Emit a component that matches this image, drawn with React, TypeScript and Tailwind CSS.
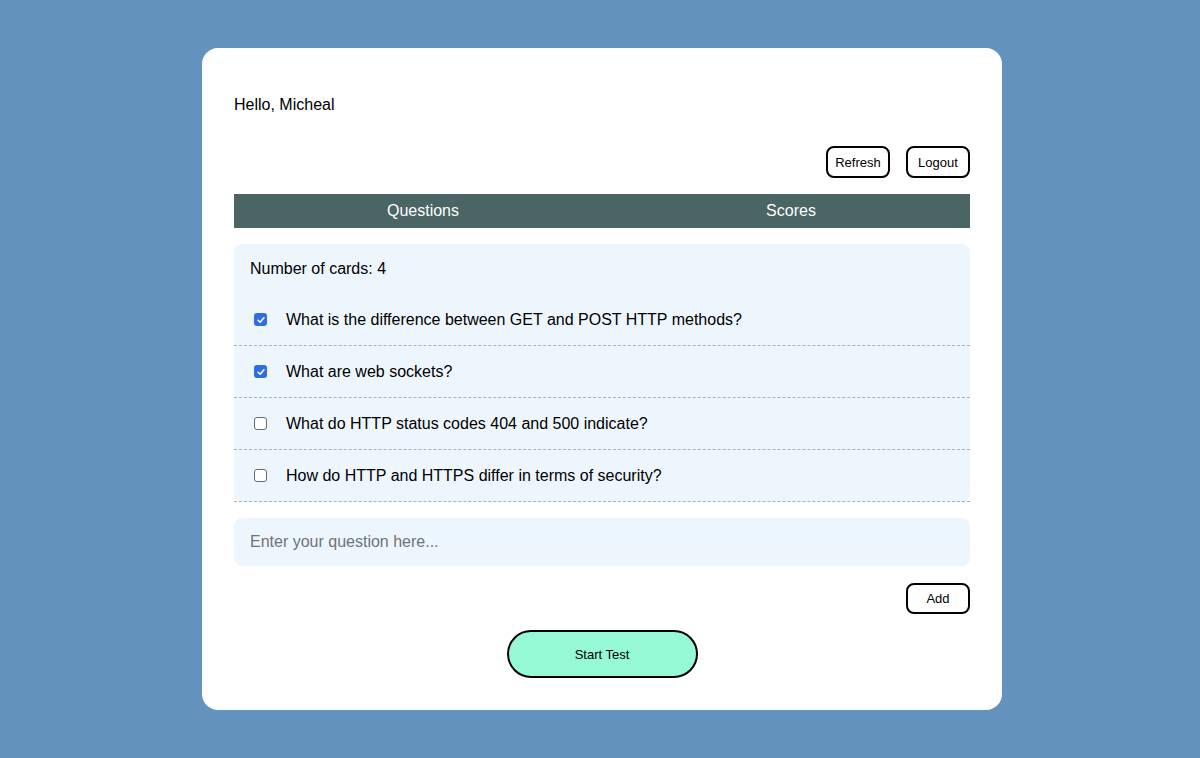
import { useState } from 'react'

interface Question {
  id: number
  text: string
  checked: boolean
}

const initialQuestions: Question[] = [
  { id: 1, text: 'What is the difference between GET and POST HTTP methods?', checked: true },
  { id: 2, text: 'What are web sockets?', checked: true },
  { id: 3, text: 'What do HTTP status codes 404 and 500 indicate?', checked: false },
  { id: 4, text: 'How do HTTP and HTTPS differ in terms of security?', checked: false },
]

function CheckBox({ checked, onToggle }: { checked: boolean; onToggle: () => void }) {
  return (
    <button
      type="button"
      onClick={onToggle}
      className={
        checked
          ? 'flex size-[13px] items-center justify-center rounded-[3px] bg-[#2f6de1]'
          : 'flex size-[13px] items-center justify-center rounded-[3px] border border-[#6b6b6b] bg-white'
      }
    >
      {checked && (
        <svg viewBox="0 0 12 12" className="size-[10px]">
          <path d="M2.5 6.3 L5 8.6 L9.5 3.4" fill="none" stroke="white" strokeWidth="1.9" strokeLinecap="round" strokeLinejoin="round" />
        </svg>
      )}
    </button>
  )
}

export default function App() {
  const [questions, setQuestions] = useState<Question[]>(initialQuestions)
  const [draft, setDraft] = useState('')

  const toggle = (id: number) => {
    setQuestions((qs) => qs.map((q) => (q.id === id ? { ...q, checked: !q.checked } : q)))
  }

  const handleAdd = () => {
    if (!draft.trim()) return
    setQuestions((qs) => [...qs, { id: Date.now(), text: draft.trim(), checked: false }])
    setDraft('')
  }

  return (
    <div className="min-h-[758px] bg-[#6392bd] pt-[48px] pl-[4px] font-['Liberation_Sans',Arial,sans-serif] text-black">
      <div className="mx-auto flex w-[800px] flex-col rounded-[16px] bg-white px-[32px] pt-[32px] pb-[32px]">
        <p className="mt-[13px] text-[16px] leading-6">Hello, Micheal</p>

        <div className="mt-[29px] flex justify-end gap-[16px]">
          <button className="h-[32px] w-[64px] rounded-[8px] border-2 border-black pt-[2px] text-[13px]">Refresh</button>
          <button className="h-[32px] w-[64px] rounded-[8px] border-2 border-black pt-[2px] text-[13px]">Logout</button>
        </div>

        <div className="mt-[16px] grid h-[34px] grid-cols-2 bg-[#4b6464] text-[16px] text-white">
          <button className="pl-[10px] leading-[34px]">Questions</button>
          <button className="pl-[10px] leading-[34px]">Scores</button>
        </div>

        <div className="mt-[16px] rounded-[8px] bg-[#eef6fd] pt-[16px]">
          <p className="px-[16px] text-[16px] leading-[18px]">Number of cards: {questions.length}</p>
          <ul className="mt-[16px]">
            {questions.map((q) => (
              <li
                key={q.id}
                className="flex h-[52px] items-center gap-[19px] border-b border-dashed border-[#a9b1b8] pl-[20px] text-[16px]"
              >
                <CheckBox checked={q.checked} onToggle={() => toggle(q.id)} />
                <span>{q.text}</span>
              </li>
            ))}
          </ul>
        </div>

        <input
          value={draft}
          onChange={(e) => setDraft(e.target.value)}
          placeholder="Enter your question here..."
          className="mt-[16px] h-[48px] rounded-[8px] bg-[#eef6fd] px-[16px] text-[16px] outline-none placeholder:text-[#6f7378]"
        />

        <div className="mt-[17px] flex justify-end">
          <button onClick={handleAdd} className="h-[31px] w-[64px] rounded-[8px] border-2 border-black text-[13px]">
            Add
          </button>
        </div>

        <div className="mt-[16px] flex justify-center">
          <button className="h-[48px] w-[191px] rounded-full border-2 border-black bg-[#94f9d4] pt-[2px] text-[13px]">
            Start Test
          </button>
        </div>
      </div>
    </div>
  )
}
